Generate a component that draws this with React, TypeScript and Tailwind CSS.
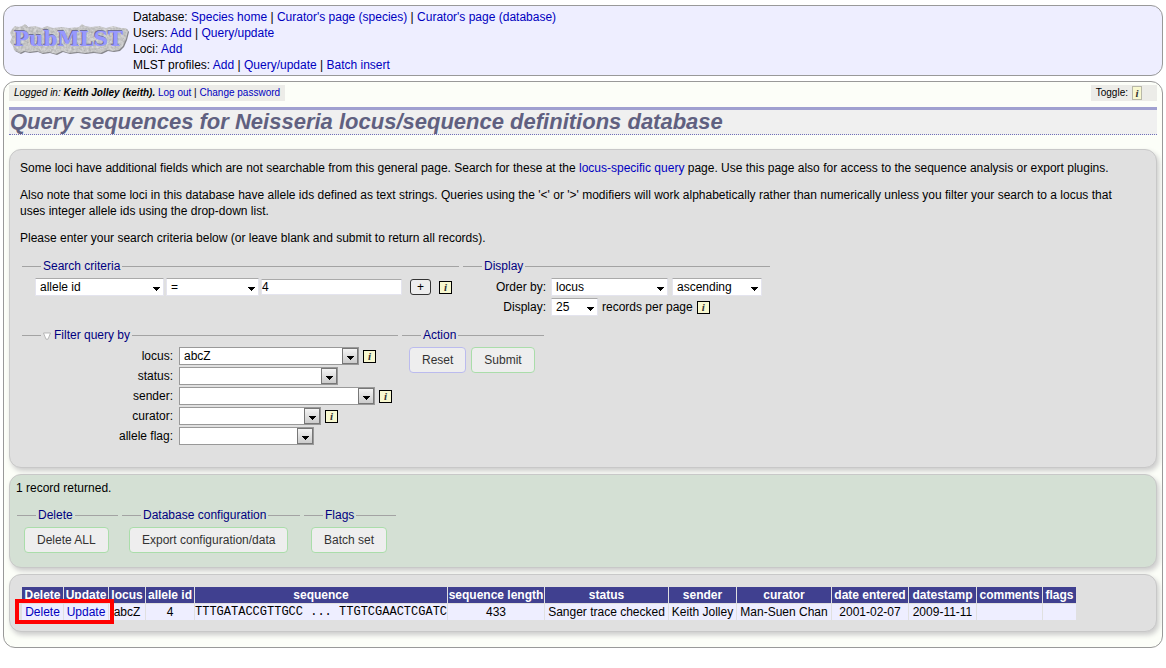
import type { ReactNode } from "react";

const FONT = "font-['Liberation_Sans',Arial,sans-serif]";

function A({ children }: { children: ReactNode }) {
  return (
    <a href="#" className="text-[#0000c0] hover:underline">
      {children}
    </a>
  );
}

const STONE =
  "M3 8L6 5L10 6L13 5L16 3L19 6L26 5L33 7L38 5L44 7L52 6L60 7L70 6L73 3L76 5L82 6L90 5L97 7L104 5L112 7L117 7L119 10L117 18L114 25L110 29L104 30L98 29L92 32L84 31L76 32L68 31L60 32L53 30L47 33L40 31L33 32L28 30L20 31L15 30L11 32L5 29L4 25L1 21L3 16L1 12Z";

function Logo() {
  return (
    <svg width="120" height="40" viewBox="0 0 120 40" role="img" aria-label="PubMLST" className="shrink-0">
      <defs>
        <filter id="stone" x="0" y="0" width="100%" height="100%" colorInterpolationFilters="sRGB">
          <feTurbulence type="fractalNoise" baseFrequency="0.4" numOctaves="2" seed="4" result="n" />
          <feColorMatrix
            in="n"
            type="matrix"
            values="0.25 0.1 0 0 0.6  0.25 0.1 0 0 0.6  0.25 0.1 0 0 0.6  0 0 0 0 1"
            result="g"
          />
          <feComposite in="g" in2="SourceGraphic" operator="in" />
        </filter>
      </defs>
      <path d={STONE} transform="translate(1 1)" fill="#85858a" />
      <path d={STONE} fill="#ccc" filter="url(#stone)" />
      <g fontFamily="'DejaVu Serif',serif" fontWeight="bold" fontSize="20">
        <text x="4" y="24" fill="#707098">
          PubMLST
        </text>
        <text x="5" y="25" fill="#9898ff">
          PubMLST
        </text>
      </g>
    </svg>
  );
}

function Info({ small = false }: { small?: boolean }) {
  return (
    <button
      type="button"
      aria-label="Information"
      className={
        (small ? "h-[14px] w-[10px] border-[#b8b8a8]" : "size-[13px] border-black") +
        " inline-flex shrink-0 items-center justify-center border bg-[#f8f8d0] font-['Liberation_Serif',serif] text-[11px] leading-[11px] font-bold text-[#333] italic"
      }
    >
      i
    </button>
  );
}

function Field({ title, toggle, className, children }: { title: string; toggle?: boolean; className: string; children: ReactNode }) {
  return (
    <fieldset className={"min-w-0 border-t border-[#a3a3a3] pl-[19px] " + className}>
      <legend className="px-0.5 leading-4 text-[#000080]">
        {toggle && (
          <svg width="8" height="8" viewBox="0 0 8 8" className="mr-[3px] inline-block align-[-1px]">
            <path d="M.5 1h7L5 7.200h-2z" fill="#fff" stroke="#aaa" strokeWidth=".8" />
          </svg>
        )}
        {title}
      </legend>
      {children}
    </fieldset>
  );
}

function Select({ id, label, value, boxed, className }: { id: string; label?: string; value: string; boxed?: boolean; className: string }) {
  return (
    <span className={"relative inline-flex h-[18px] shrink-0 " + className}>
      <select
        id={id}
        aria-label={label}
        className={
          (boxed ? "border-[#999]" : "border-t-[#aaa] border-x-[#e4e4ee] border-b-[#e4e4ee]") +
          " h-full w-full appearance-none border bg-white pl-1 text-[12px] leading-4 text-black"
        }
      >
        <option>{value}</option>
      </select>
      <span
        className={
          boxed
            ? "pointer-events-none absolute inset-y-px right-px flex w-4 items-center justify-center border border-[#777] bg-linear-to-b from-[#f4f4f4] to-[#ccc] pt-1"
            : "pointer-events-none absolute inset-y-0 right-1 flex items-center pt-1"
        }
      >
        <svg width="7" height="4" viewBox="0 0 7 4" shapeRendering="crispEdges">
          <path d="M0 0h7v1h-1v1h-1v1h-1v1h-1v-1h-1v-1h-1v-1h-1z" />
        </svg>
      </span>
    </span>
  );
}

function Button({ children, reset }: { children: ReactNode; reset?: boolean }) {
  return (
    <button
      type="button"
      className={
        (reset ? "border-[#bbbbee]" : "border-[#aaddaa]") +
        " h-[26px] rounded border bg-[#eee] px-3 text-[12px] whitespace-nowrap text-[#333]"
      }
    >
      {children}
    </button>
  );
}

const filters = [
  { id: "locus", value: "abcZ", width: "w-[180px]", info: true },
  { id: "status", value: "", width: "w-[159px]", info: false },
  { id: "sender", value: "", width: "w-[196px]", info: true },
  { id: "curator", value: "", width: "w-[142px]", info: true },
  { id: "allele flag", value: "", width: "w-[135px]", info: false },
];

const columns = [
  { name: "Delete", width: "w-[41px]" },
  { name: "Update", width: "w-[44px]" },
  { name: "locus", width: "w-[36px]" },
  { name: "allele id", width: "w-[48px]" },
  { name: "sequence", width: "w-[252px]" },
  { name: "sequence length", width: "w-[96px]" },
  { name: "status", width: "w-[123px]" },
  { name: "sender", width: "w-[67px]" },
  { name: "curator", width: "w-[94px]" },
  { name: "date entered", width: "w-[76px]" },
  { name: "datestamp", width: "w-[67px]" },
  { name: "comments", width: "w-[65px]" },
  { name: "flags", width: "w-[33px]" },
];

const record: ReactNode[] = [
  <A>Delete</A>,
  <A>Update</A>,
  "abcZ",
  "4",
  <span className="align-top font-['Liberation_Mono',monospace]">TTTGATACCGTTGCC ... TTGTCGAACTCGATC</span>,
  "433",
  "Sanger trace checked",
  "Keith Jolley",
  "Man-Suen Chan",
  "2001-02-07",
  "2009-11-11",
  "",
  "",
];

const PANEL = "rounded-[12px] border border-[#c8c8c8] shadow-[2px_3px_5px_#ccc]";

export default function App() {
  return (
    <div className={FONT + " bg-white px-[3px] pt-[5px] pb-5 text-[12px] leading-4 text-black"}>
      <header className="flex items-start gap-1 rounded-[12px] border border-[#999] bg-[#eeeeff] pt-[3px] pb-[2px] pl-[5px]">
        <div className="pt-3">
          <Logo />
        </div>
        <nav className="leading-4">
          <p>
            Database: <A>Species home</A> | <A>Curator's page (species)</A> | <A>Curator's page (database)</A>
          </p>
          <p>
            Users: <A>Add</A> | <A>Query/update</A>
          </p>
          <p>
            Loci: <A>Add</A>
          </p>
          <p>
            MLST profiles: <A>Add</A> | <A>Query/update</A> | <A>Batch insert</A>
          </p>
        </nav>
      </header>

      <main className="mt-[5px] rounded-[12px] border border-[#999] bg-[#fcfef8] px-[5px] pt-[3px] pb-[15px]">
        <div className="flex justify-between text-[10px] leading-4">
          <p className="bg-[#ecece8] px-[5px]">
            <i>
              Logged in: <b>Keith Jolley (keith).</b>
            </i>{" "}
            <A>Log out</A> | <A>Change password</A>
          </p>
          <p className="flex items-center gap-1 bg-[#ecece8] pr-[15px] pl-[5px]">
            Toggle: <Info small />
          </p>
        </div>
        <h1 className="mt-[6px] border-t-[3px] border-b border-t-[#a0a0d0] border-b-[#7070b8] bg-[#f0f0f0] pl-px text-[22px] leading-6 font-bold text-[#606080] italic [border-bottom-style:dotted]">
          Query sequences for Neisseria locus/sequence definitions database
        </h1>

        <section className={PANEL + " mt-[14px] bg-[#e0e0e0] px-[10px] pt-[10px] pb-[22px]"}>
          <p>
            Some loci have additional fields which are not searchable from this general page. Search for these at the{" "}
            <A>locus-specific query</A> page. Use this page also for access to the sequence analysis or export plugins.
          </p>
          <p className="mt-[11px] pr-5">
            Also note that some loci in this database have allele ids defined as text strings. Queries using the '&lt;'
            or '&gt;' modifiers will work alphabetically rather than numerically unless you filter your search to a locus
            that uses integer allele ids using the drop-down list.
          </p>
          <p className="mt-[11px]">Please enter your search criteria below (or leave blank and submit to return all records).</p>

          <form className="mt-3 pl-[2px]">
            <div className="flex gap-1">
              <Field title="Search criteria" className="w-[437px]">
                <div className="-ml-[6px] flex items-center gap-0.5 pt-1">
                  <Select id="field" label="Search field" value="allele id" className="w-[129px]" />
                  <Select id="operator" label="Operator" value="=" className="w-[93px]" />
                  <input
                    aria-label="Search value"
                    defaultValue="4"
                    className="h-4 w-[141px] border border-t-[#aaa] border-r-[#e4e4ee] border-b-[#e4e4ee] border-l-[#e4e4ee] bg-white text-[12px]"
                  />
                  <button
                    type="button"
                    aria-label="Add search term"
                    className="ml-[6px] flex h-4 w-[21px] items-center justify-center rounded-[3px] border border-[#333] bg-[#eee] leading-3"
                  >
                    +
                  </button>
                  <span className="ml-[6px] flex">
                    <Info />
                  </span>
                </div>
              </Field>
              <Field title="Display" className="w-[307px]">
                <div className="-ml-[19px] grid grid-cols-[83px_auto] items-center gap-x-[5px] gap-y-[2px] pt-1">
                  <label htmlFor="order" className="text-right">
                    Order by:
                  </label>
                  <span className="flex gap-1">
                    <Select id="order" value="locus" className="w-[117px]" />
                    <Select id="direction" label="Sort direction" value="ascending" className="w-[90px]" />
                  </span>
                  <label htmlFor="display" className="text-right">
                    Display:
                  </label>
                  <span className="flex items-center gap-1">
                    <Select id="display" value="25" className="w-[47px]" />
                    records per page
                    <Info />
                  </span>
                </div>
              </Field>
            </div>

            <div className="mt-[11px] flex gap-1">
              <Field title="Filter query by" toggle className="w-[376px]">
                <div className="-ml-[19px] grid gap-[2px] pt-1">
                  {filters.map((f) => (
                    <div key={f.id} className="grid grid-cols-[151px_auto] items-center gap-[6px]">
                      <label htmlFor={f.id} className="text-right">
                        {f.id}:
                      </label>
                      <span className="flex items-center gap-1">
                        <Select id={f.id} value={f.value} boxed className={f.width} />
                        {f.info && <Info />}
                      </span>
                    </div>
                  ))}
                </div>
              </Field>
              <Field title="Action" className="w-[142px]">
                <div className="-ml-3 flex gap-[5px] pt-1">
                  <Button reset>Reset</Button>
                  <Button>Submit</Button>
                </div>
              </Field>
            </div>
          </form>
        </section>

        <section className={PANEL + " mt-[6px] bg-[#d4e0d4] pt-[5px] pr-[6px] pb-[14px] pl-[6px]"}>
          <p>1 record returned.</p>
          <div className="mt-[11px] flex gap-1 pl-px">
            <Field title="Delete" className="w-[101px]">
              <div className="-ml-3 pt-1">
                <Button>Delete ALL</Button>
              </div>
            </Field>
            <Field title="Database configuration" className="w-[178px]">
              <div className="-ml-3 pt-1">
                <Button>Export configuration/data</Button>
              </div>
            </Field>
            <Field title="Flags" className="w-[92px]">
              <div className="-ml-3 pt-1">
                <Button>Batch set</Button>
              </div>
            </Field>
          </div>
        </section>

        <section className={PANEL + " mt-[6px] bg-[#e0e0e0] px-[11px] pt-[11px] pb-[10px]"}>
          <div className="relative">
            <table className="w-[1056px] table-fixed border-separate border-spacing-px text-center leading-4 whitespace-nowrap">
              <thead>
                <tr className="bg-[#404090] text-white">
                  {columns.map((c) => (
                    <th key={c.name} className={"p-0 font-bold " + c.width}>
                      {c.name}
                    </th>
                  ))}
                </tr>
              </thead>
              <tbody>
                <tr className="bg-[#eeeeff]">
                  {record.map((cell, i) => (
                    <td key={columns[i].name} className="h-4 p-0">
                      {cell}
                    </td>
                  ))}
                </tr>
              </tbody>
            </table>
            <div className="pointer-events-none absolute top-[13px] -left-[6px] h-[25px] w-[99px] border-4 border-[#ff0000]" />
          </div>
        </section>
      </main>
    </div>
  );
}
